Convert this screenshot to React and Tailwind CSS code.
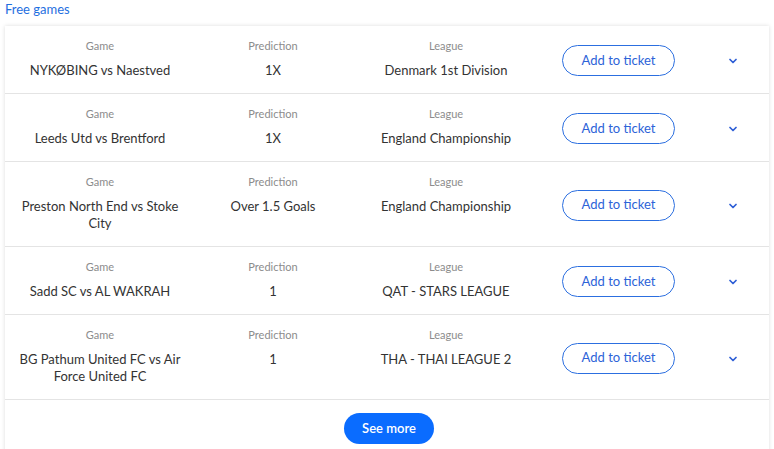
import { ChevronDown } from "lucide-react";

const games = [
    { game: "NYKØBING vs Naestved", prediction: "1X", league: "Denmark 1st Division" },
    { game: "Leeds Utd vs Brentford", prediction: "1X", league: "England Championship" },
    { game: "Preston North End vs Stoke City", prediction: "Over 1.5 Goals", league: "England Championship" },
    { game: "Sadd SC vs AL WAKRAH", prediction: "1", league: "QAT - STARS LEAGUE" },
    { game: "BG Pathum United FC vs Air Force United FC", prediction: "1", league: "THA - THAI LEAGUE 2" },
];

function Cell({ label, value, width }) {
    return (
        <div className={`${width} flex flex-col items-center text-center px-[12px]`}>
            <span className="text-[11px] leading-[16px] text-[#8c8c8c]">{label}</span>
            <span className="mt-[8px] text-[13px] leading-[17px] text-[#333]">{value}</span>
        </div>
    );
}

export default function App() {
    return (
        <div className="min-h-[449px] bg-white px-[5px] font-['Lato',sans-serif]">
            <div className="h-[20px] text-[13px] leading-[18px] text-[#1f6fe0]">Free games</div>
            <div className="mt-[6px] bg-white shadow-[0_0_4px_rgba(0,0,0,0.14)]">
                {games.map((g, i) => (
                    <div key={i} className="flex items-start border-b border-[#e4e4e4] pt-[12px] pb-[14px]">
                        <Cell label="Game" value={g.game} width="w-[190px]" />
                        <Cell label="Prediction" value={g.prediction} width="w-[156px]" />
                        <Cell label="League" value={g.league} width="w-[190px]" />
                        <div className="w-[155px] flex justify-center self-center mt-[4px]">
                            <button className="w-[113px] h-[31px] rounded-full border border-[#2c6fe0] text-[13px] text-[#2d63d8]">
                                Add to ticket
                            </button>
                        </div>
                        <div className="flex-1 flex justify-center self-center mt-[5px]">
                            <ChevronDown size={12} strokeWidth={3.5} className="text-[#2d5ed6]" />
                        </div>
                    </div>
                ))}
                <div className="flex justify-center pt-[13px] pb-[8px] pl-[4px]">
                    <button className="w-[90px] h-[31px] rounded-full bg-[#0a6cff] text-white text-[13px] font-semibold">
                        See more
                    </button>
                </div>
            </div>
        </div>
    );
}
